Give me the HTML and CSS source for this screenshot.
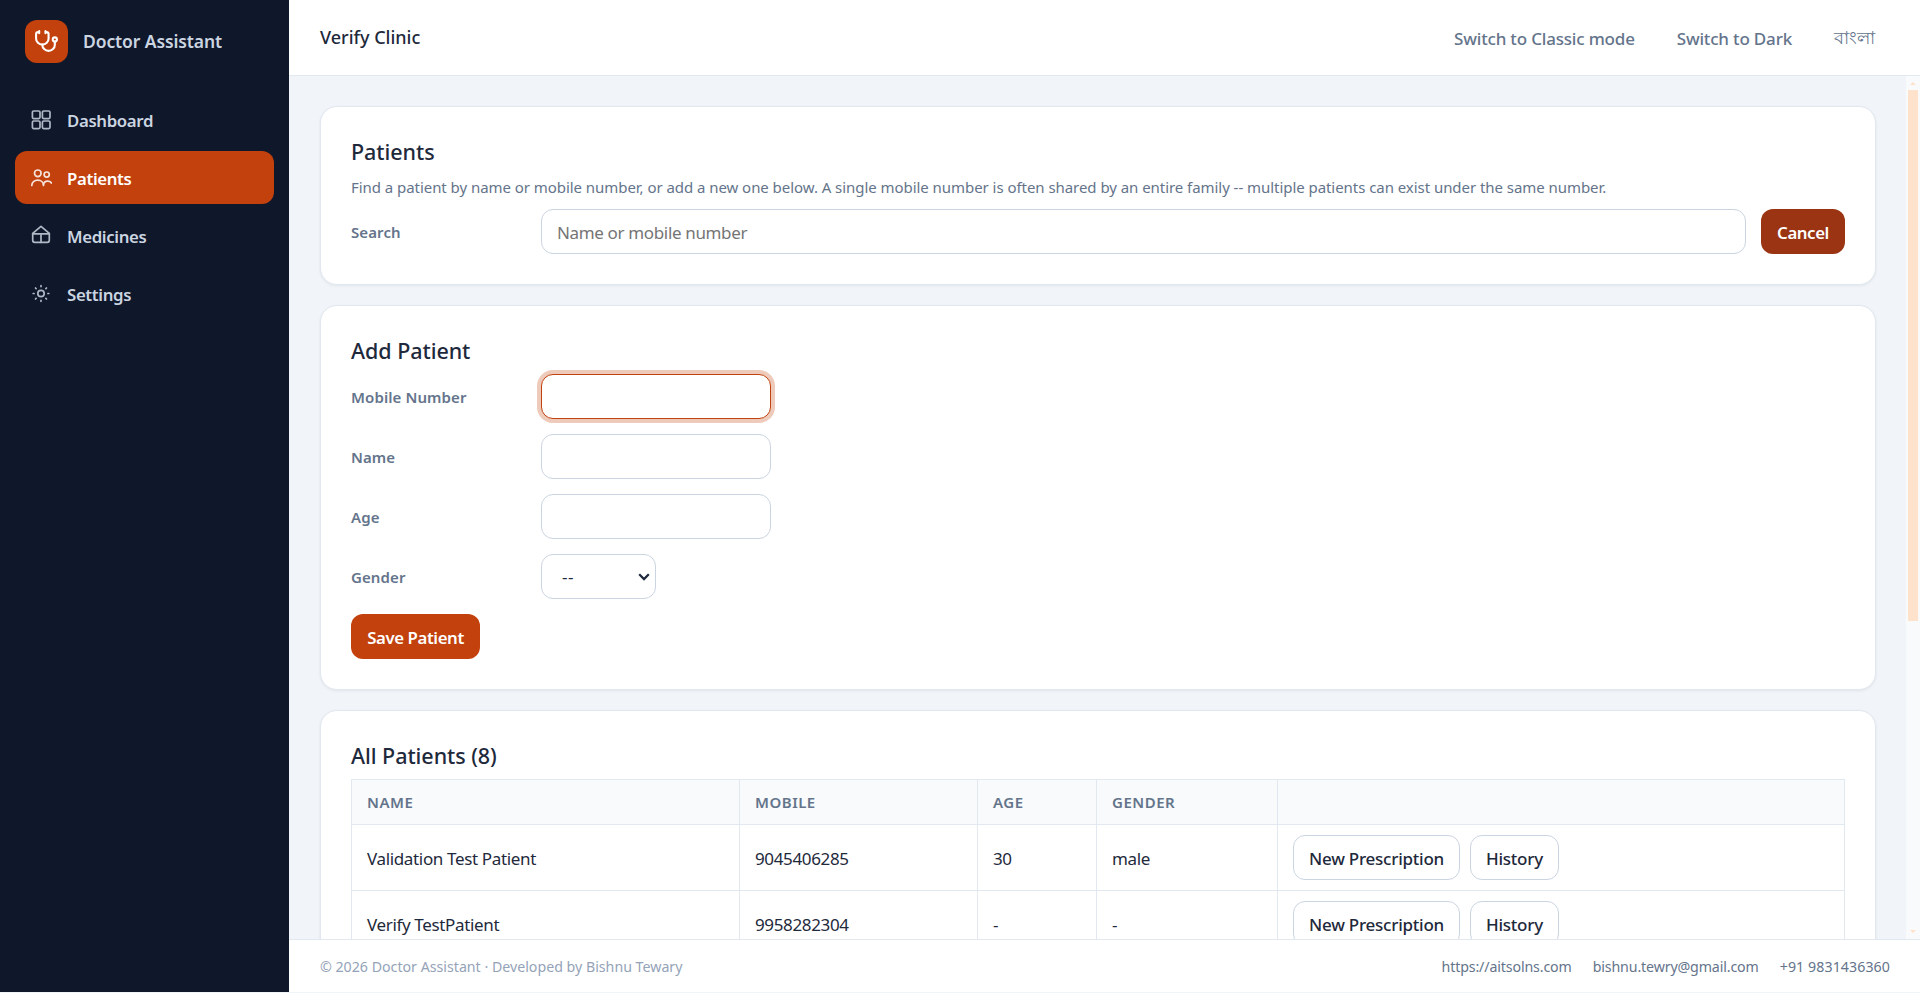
FILE: index.html
```html
<!DOCTYPE html>
<html lang="en">
<head>
    <meta charset="UTF-8">
    <meta name="viewport" content="width=device-width, initial-scale=1.0">
    <title>Doctor Assistant - Patients</title>
    <link rel="stylesheet" href="styles.css">
</head>
<body>

    <div class="app">
        <!-- Sidebar -->
        <aside class="sidebar">
            <div class="brand">
                <span class="brand-logo">
                    <svg width="25" height="25" viewBox="0 0 24 24" fill="none" stroke="currentColor" stroke-width="2" stroke-linecap="round" stroke-linejoin="round">
                        <path d="M11 2v2M5 2v2M5 3H4a2 2 0 0 0-2 2v4a6 6 0 0 0 12 0V5a2 2 0 0 0-2-2h-1"/>
                        <path d="M8 15a6 6 0 0 0 12 0v-3"/>
                        <circle cx="20" cy="10" r="2"/>
                    </svg>
                </span>
                <span class="brand-name">Doctor Assistant</span>
            </div>
            <nav class="nav">
                <a class="nav-item" href="#">
                    <svg class="nav-icon" viewBox="0 0 22 22">
                        <rect x="2.4" y="2" width="7.6" height="7.6" rx="1.3"/>
                        <rect x="12.4" y="2" width="7.6" height="7.6" rx="1.3"/>
                        <rect x="2.4" y="12" width="7.6" height="7.6" rx="1.3"/>
                        <rect x="12.4" y="12" width="7.6" height="7.6" rx="1.3"/>
                    </svg>
                    <span>Dashboard</span>
                </a>
                <a class="nav-item active" href="#">
                    <svg class="nav-icon" viewBox="0 0 22 22">
                        <circle cx="7.8" cy="6.3" r="3.3"/>
                        <circle cx="16.7" cy="7.6" r="2.6"/>
                        <path d="M1.8 18.4c0-3 2.6-5.2 5.9-5.2s5.8 2.2 5.8 5.2"/>
                        <path d="M13.5 17.5c.4-2.2 1.9-3.4 4-3.4 1.7 0 3.2.7 3.9 1.9"/>
                    </svg>
                    <span>Patients</span>
                </a>
                <a class="nav-item" href="#">
                    <svg class="nav-icon" viewBox="0 0 22 22">
                        <path d="M2.700 8.400 11 1.300l8.300 7.100v6.900a2 2 0 0 1-2 2H4.700a2 2 0 0 1-2-2z"/>
                        <path d="M2.700 8.900h16.600M11 8.900v8.400"/>
                    </svg>
                    <span>Medicines</span>
                </a>
                <a class="nav-item" href="#">
                    <svg class="nav-icon" viewBox="0 0 22 22">
                        <circle cx="11" cy="10.500" r="3.200"/>
                        <path d="M11 2.700v.9M11 17.400v.9M3.200 10.500h.9M17.900 10.500h.9M5.500 5l.6.6M15.900 15.400l.6.6M5.500 16l.6-.6M15.900 5.600l.6-.6"/>
                    </svg>
                    <span>Settings</span>
                </a>
            </nav>
        </aside>

        <div class="main">
            <header class="topbar">
                <span class="clinic-name">Verify Clinic</span>
                <div class="topbar-links">
                    <a href="#">Switch to Classic mode</a>
                    <a href="#">Switch to Dark</a>
                    <a class="lang" href="#">বাংলা</a>
                </div>
            </header>

            <div class="body">
                <div class="content">
                    <!-- Search -->
                    <section class="card">
                        <h2>Patients</h2>
                        <p class="hint">Find a patient by name or mobile number, or add a new one below. A single mobile number is often shared by an entire family -- multiple patients can exist under the same number.</p>
                        <div class="form-row">
                            <label for="search">Search</label>
                            <input class="search" type="text" id="search" placeholder="Name or mobile number">
                            <button class="btn btn-dark">Cancel</button>
                        </div>
                    </section>

                    <!-- Add patient form -->
                    <section class="card">
                        <h2>Add Patient</h2>
                        <div class="form-row">
                            <label for="mobile">Mobile Number</label>
                            <input class="focused" type="text" id="mobile">
                        </div>
                        <div class="form-row">
                            <label for="name">Name</label>
                            <input type="text" id="name">
                        </div>
                        <div class="form-row">
                            <label for="age">Age</label>
                            <input type="text" id="age">
                        </div>
                        <div class="form-row">
                            <label for="gender">Gender</label>
                            <div class="select-wrap">
                                <select id="gender">
                                    <option>--</option>
                                    <option>male</option>
                                    <option>female</option>
                                </select>
                                <svg class="chevron" width="12" height="8" viewBox="0 0 12 8"><path d="M1.2 1.3 6 6.1l4.8-4.8"/></svg>
                            </div>
                        </div>
                        <button class="btn btn-primary">Save Patient</button>
                    </section>

                    <!-- Patient list -->
                    <section class="card">
                        <h2>All Patients (8)</h2>
                        <table>
                            <colgroup>
                                <col class="col-name">
                                <col class="col-mobile">
                                <col class="col-age">
                                <col class="col-gender">
                                <col>
                            </colgroup>
                            <thead>
                                <tr>
                                    <th>Name</th>
                                    <th>Mobile</th>
                                    <th>Age</th>
                                    <th>Gender</th>
                                    <th></th>
                                </tr>
                            </thead>
                            <tbody>
                                <tr>
                                    <td>Validation Test Patient</td>
                                    <td>9045406285</td>
                                    <td>30</td>
                                    <td>male</td>
                                    <td class="actions-cell">
                                        <div class="actions">
                                            <button class="btn btn-outline">New Prescription</button>
                                            <button class="btn btn-outline">History</button>
                                        </div>
                                    </td>
                                </tr>
                                <tr>
                                    <td>Verify TestPatient</td>
                                    <td>9958282304</td>
                                    <td>-</td>
                                    <td>-</td>
                                    <td class="actions-cell">
                                        <div class="actions">
                                            <button class="btn btn-outline">New Prescription</button>
                                            <button class="btn btn-outline">History</button>
                                        </div>
                                    </td>
                                </tr>
                            </tbody>
                        </table>
                    </section>
                </div>

                <div class="scrollbar">
                    <span class="arrow-up"></span>
                    <span class="thumb"></span>
                    <span class="arrow-down"></span>
                </div>
            </div>

            <footer class="footer">
                <span>© 2026 Doctor Assistant · Developed by Bishnu Tewary</span>
                <div class="footer-links">
                    <a class="site" href="#">https://aitsolns.com</a>
                    <a class="mail" href="#">bishnu.tewry@gmail.com</a>
                    <a href="#">+91 9831436360</a>
                </div>
            </footer>
        </div>
    </div>

</body>
</html>
```
FILE: styles.css
```css
* {
    margin: 0;
    padding: 0;
    box-sizing: border-box;
}

body {
    font-family: 'Segoe UI', 'Noto Sans', sans-serif;
    font-size: 17px;
    color: #1e293b;
    background: #f1f5f9;
    overflow: hidden;
}

a {
    color: inherit;
    text-decoration: none;
}

.app {
    display: flex;
    height: 992px;
}

/* Sidebar */
.sidebar {
    width: 289px;
    flex-shrink: 0;
    background: #0f172a;
    color: #cbd5e1;
    padding: 20px 15px;
}

.brand {
    display: flex;
    align-items: center;
    gap: 15px;
    padding-left: 10px;
    margin-bottom: 30px;
}

.brand-logo {
    display: flex;
    align-items: center;
    justify-content: center;
    width: 43px;
    height: 43px;
    border-radius: 12px;
    background: #c2410c;
    color: #fff;
}

.brand-name {
    font-size: 17.5px;
    font-weight: 600;
    letter-spacing: -0.1px;
    padding-bottom: 1px;
}

.nav {
    display: flex;
    flex-direction: column;
    gap: 5px;
}

.nav-item {
    display: flex;
    align-items: center;
    gap: 15px;
    height: 53px;
    padding: 0 15px;
    border-radius: 12px;
    font-size: 16.8px;
    font-weight: 600;
    letter-spacing: -0.35px;
}

.nav-item span {
    padding-top: 2px;
}

.nav-item.active {
    background: #c2410c;
    color: #fff;
}

.nav-icon {
    width: 22px;
    height: 22px;
    fill: none;
    stroke: currentColor;
    stroke-width: 1.7;
    stroke-linecap: round;
    stroke-linejoin: round;
    opacity: 0.85;
}

/* Main column */
.main {
    flex: 1;
    min-width: 0;
    display: flex;
    flex-direction: column;
}

.topbar {
    display: flex;
    align-items: center;
    justify-content: space-between;
    height: 76px;
    padding: 0 45px 0 31px;
    background: #fff;
    border-bottom: 1px solid #e2e8f0;
}

.clinic-name {
    font-size: 18px;
    font-weight: 500;
    padding-bottom: 1px;
}

.topbar-links {
    display: flex;
    align-items: center;
    gap: 42px;
    color: #64748b;
    font-weight: 500;
    letter-spacing: -0.18px;
    padding-top: 1px;
}

.lang {
    font-size: 18px;
    letter-spacing: 0;
    padding-top: 3px;
}

.body {
    flex: 1;
    min-height: 0;
    display: flex;
}

.content {
    flex: 1;
    display: flex;
    flex-direction: column;
    gap: 20px;
    padding: 30px 30px 0 31px;
    overflow: hidden;
}

.card {
    flex-shrink: 0;
    background: #fff;
    border: 1px solid #e2e8f0;
    border-radius: 17px;
    padding: 30px;
    box-shadow: 0 1px 3px rgba(15, 23, 42, 0.07);
}

h2 {
    font-size: 21.5px;
    font-weight: 500;
    line-height: 30px;
    letter-spacing: -0.05px;
    margin-bottom: 8px;
}

.hint {
    font-size: 15px;
    line-height: 25px;
    letter-spacing: -0.05px;
    color: #64748b;
    margin-bottom: 9px;
}

.form-row {
    display: flex;
    align-items: center;
    gap: 15px;
    margin-bottom: 15px;
}

.form-row:last-child {
    margin-bottom: 0;
}

label {
    width: 175px;
    font-size: 15px;
    font-weight: 600;
    letter-spacing: 0.1px;
    color: #64748b;
}

input, select {
    width: 230px;
    height: 45px;
    padding: 1px 15px 0;
    font-family: inherit;
    font-size: 17px;
    letter-spacing: -0.35px;
    color: #1e293b;
    background: #fff;
    border: 1px solid #cbd5e1;
    border-radius: 12px;
    outline: none;
}

input.search {
    flex: 1;
}

input.focused {
    border-color: #c2410c;
    box-shadow: 0 0 0 4px rgba(194, 65, 12, 0.28);
}

.select-wrap {
    position: relative;
    display: flex;
}

select {
    width: 115px;
    padding: 0 0 0 20px;
    letter-spacing: 0.5px;
    appearance: none;
}

.chevron {
    position: absolute;
    right: 6px;
    top: 19px;
    fill: none;
    stroke: #1e293b;
    stroke-width: 2.2;
    pointer-events: none;
}

.btn {
    height: 45px;
    padding: 1px 16px 0;
    font-family: inherit;
    font-size: 17px;
    font-weight: 500;
    letter-spacing: -0.24px;
    white-space: nowrap;
    border: none;
    border-radius: 12px;
    cursor: pointer;
}

.btn-primary, .btn-dark {
    font-size: 16.8px;
    font-weight: 600;
    letter-spacing: -0.4px;
    color: #fff;
}

.btn-primary {
    width: 129px;
    background: #c2410c;
}

.btn-dark {
    width: 84px;
    background: #9a3412;
}

.btn-outline {
    background: #fff;
    color: #1e293b;
    border: 1px solid #cbd5e1;
    padding: 1px 15px 0;
}

/* Table */
table {
    width: 100%;
    border-collapse: collapse;
    table-layout: fixed;
}

.col-name {
    width: 388px;
}

.col-mobile {
    width: 238px;
}

.col-age {
    width: 119px;
}

.col-gender {
    width: 181px;
}

th, td {
    border: 1px solid #e2e8f0;
    padding: 0 15px;
    text-align: left;
}

th {
    height: 45px;
    background: #f8fafc;
    color: #64748b;
    font-size: 15px;
    font-weight: 600;
    letter-spacing: 0.5px;
    text-transform: uppercase;
}

td {
    height: 66px;
    padding-top: 2px;
    letter-spacing: -0.35px;
}

td.actions-cell {
    padding-top: 0;
}

.actions {
    display: flex;
    gap: 10px;
}

/* Scrollbar */
.scrollbar {
    width: 14px;
    display: flex;
    flex-direction: column;
    align-items: center;
    padding: 6px 0;
    background: #f8fafc;
}

.arrow-up, .arrow-down {
    border: 3px solid transparent;
}

.arrow-up {
    border-top: none;
    border-bottom-color: #ffe2cc;
    margin-bottom: 5px;
}

.arrow-down {
    border-bottom: none;
    border-top-color: #ffe2cc;
    margin-top: auto;
}

.thumb {
    width: 10px;
    height: 531px;
    background: #ffe2cc;
}

/* Footer */
.footer {
    display: flex;
    align-items: center;
    justify-content: space-between;
    height: 53px;
    padding: 0 30px 0 31px;
    background: #fff;
    border-top: 1px solid #e2e8f0;
    font-size: 14.2px;
    color: #94a3b8;
}

.footer-links {
    display: flex;
    gap: 21px;
    color: #64748b;
}

.footer-links a {
    letter-spacing: 0.08px;
}

.footer-links .site, .footer-links .mail {
    letter-spacing: -0.13px;
}
```
